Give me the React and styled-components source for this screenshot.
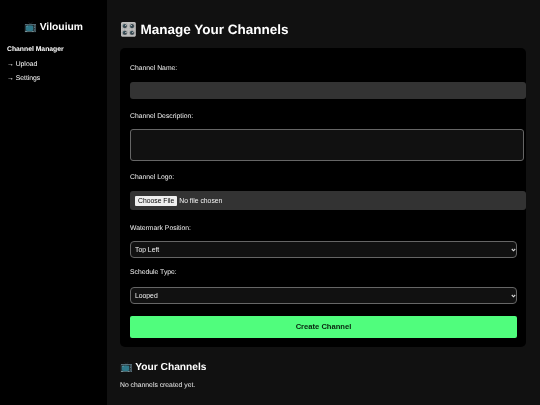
import React from "react";
import styled, { createGlobalStyle } from "styled-components";

const Global = createGlobalStyle`
  html, body { margin: 0; padding: 0; height: 100%; background: #111; }
  body { font-family: "Liberation Sans", Arial, sans-serif; color: #fff; overflow: hidden; text-rendering: geometricPrecision; }
  #root { height: 405px; }
`;
const Shell = styled.div`display: flex; height: 405px; will-change: transform;`;
const Sidebar = styled.aside`
  width: 107px; flex: none; background: #000; box-sizing: border-box; padding: 20.5px 7px 0;
`;
const Brand = styled.h2`
  margin: 0 0 12.5px; font-size: 10.3px; line-height: 13px; font-weight: 700; text-align: center; color: #fff;
`;
const NavItem = styled.a`
  display: block; font-size: 6.8px; line-height: 8px; margin-bottom: 6.6px; color: #fff;
  font-weight: ${p => (p.$active ? 700 : 400)};
`;
const Main = styled.main`flex: 1; min-width: 0; box-sizing: border-box; padding: 21px 14px 0 13px;`;
const Title = styled.h1`margin: 0 0 9px; font-size: 13.5px; line-height: 18px; font-weight: 700; color: #fff;`;
const Card = styled.form`
  background: #000; border-radius: 5px; box-sizing: border-box; height: 299px; padding: 17px 10px 0;
`;
const Label = styled.label`
  display: block; font-size: 6.8px; line-height: 8px; color: #f2f2f2; margin-bottom: ${p => p.$gap}px;
`;
const TextField = styled.input`
  display: block; box-sizing: border-box; width: 396px; height: 17px; margin: 0 0 14px; padding: 0;
  border: 0; border-radius: 3px; background: #333;
`;
const Area = styled.textarea`
  display: block; box-sizing: border-box; width: 394px; height: 32px; margin: 0 0 13px; padding: 0;
  border: 1px solid #666; border-radius: 3px; background: #111; resize: none;
`;
const FileField = styled.input`
  display: block; box-sizing: border-box; width: 396px; height: 19px; margin: 0 0 14.5px; padding: 4px 5px;
  border: 0; border-radius: 3px; background: #333; color: #f2f2f2;
  font: 6.8px/11px "Liberation Sans", Arial, sans-serif;
  &::file-selector-button {
    font: 6.8px "Liberation Sans", Arial, sans-serif; height: 10px; padding: 0 3px; margin-right: 2px;
    border: 0; border-radius: 1px; background: #efefef; color: #000;
  }
`;
const SelectWrap = styled.div`position: relative; width: 387px; margin: 0 0 ${p => p.$gap}px;`;
const Select = styled.select`
  display: block; box-sizing: border-box; width: 100%; height: 17px; margin: 0; padding: 0 0 1px 4px;
  appearance: none; border: 1px solid #666; border-radius: 4px; background: #111; color: #f2f2f2;
  font: 6.8px "Liberation Sans", Arial, sans-serif;
`;
const Chevron = styled.svg`
  position: absolute; right: 1.5px; top: 6.5px; width: 5px; height: 4px; pointer-events: none;
`;
const Submit = styled.button`
  display: block; width: 387px; height: 22px; border: 0; border-radius: 2px; background: #50fd7d; color: #08220e;
  font: 700 7.6px "Liberation Sans", Arial, sans-serif; padding: 0 0 2px;
`;
const Subtitle = styled.h2`margin: 13.5px 0 8.5px; font-size: 10.2px; line-height: 13px; font-weight: 700; color: #fff;`;
const Empty = styled.p`margin: 0; font-size: 6.8px; line-height: 8px; color: #eee;`;

const Picker = ({ gap, label }) => (
  <SelectWrap $gap={gap}>
    <Select defaultValue="a"><option value="a">{label}</option></Select>
    <Chevron viewBox="0 0 5 4" aria-hidden="true">
      <path d="M0.8 1 L2.5 2.8 L4.2 1" fill="none" stroke="#ddd" strokeWidth="1.1" />
    </Chevron>
  </SelectWrap>
);

export default function App() {
  return (
    <>
      <Global />
      <Shell>
        <Sidebar>
          <Brand>📺 Vilouium</Brand>
          <NavItem $active>Channel Manager</NavItem>
          <NavItem>→ Upload</NavItem>
          <NavItem>→ Settings</NavItem>
        </Sidebar>
        <Main>
          <Title>🎛️ Manage Your Channels</Title>
          <Card>
            <Label $gap={9}>Channel Name:</Label>
            <TextField />
            <Label $gap={8}>Channel Description:</Label>
            <Area />
            <Label $gap={9}>Channel Logo:</Label>
            <FileField type="file" />
            <Label $gap={8.5}>Watermark Position:</Label>
            <Picker gap={11} label="Top Left" />
            <Label $gap={10}>Schedule Type:</Label>
            <Picker gap={12} label="Looped" />
            <Submit type="button">Create Channel</Submit>
          </Card>
          <Subtitle>📺 Your Channels</Subtitle>
          <Empty>No channels created yet.</Empty>
        </Main>
      </Shell>
    </>
  );
}
